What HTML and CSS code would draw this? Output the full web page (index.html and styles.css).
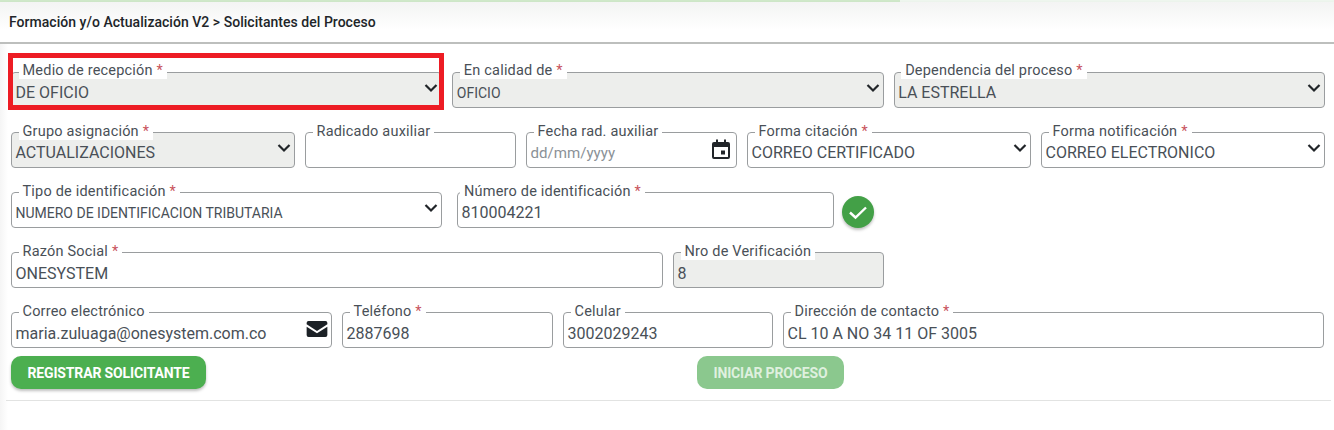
FILE: index.html
```html
<!DOCTYPE html>
<html lang="es">
<head>
<meta charset="utf-8">
<title>Solicitantes del Proceso</title>
<link rel="stylesheet" href="styles.css">
</head>
<body>
<div class="strip"><div class="progress"></div></div>
<header class="topbar">Formación y/o Actualización V2 &gt; Solicitantes del Proceso</header>
<main class="form">
  <div class="highlight"></div>
  <div class="row row-three">
    <div class="field filled"><span class="label">Medio de recepción <i>*</i></span><span class="value">DE OFICIO</span><svg class="chev" viewBox="0 0 16 16"><path d="M2.500 5 8 10.500 13.500 5"/></svg></div>
    <div class="field filled"><span class="label">En calidad de <i>*</i></span><span class="value small">OFICIO</span><svg class="chev" viewBox="0 0 16 16"><path d="M2.500 5 8 10.500 13.500 5"/></svg></div>
    <div class="field filled"><span class="label">Dependencia del proceso <i>*</i></span><span class="value">LA ESTRELLA</span><svg class="chev" viewBox="0 0 16 16"><path d="M2.500 5 8 10.500 13.500 5"/></svg></div>
  </div>
  <div class="row row-five">
    <div class="field filled"><span class="label">Grupo asignación <i>*</i></span><span class="value">ACTUALIZACIONES</span><svg class="chev" viewBox="0 0 16 16"><path d="M2.500 5 8 10.500 13.500 5"/></svg></div>
    <div class="field"><span class="label">Radicado auxiliar</span></div>
    <div class="field"><span class="label">Fecha rad. auxiliar</span><span class="value placeholder">dd/mm/yyyy</span><svg class="cal" viewBox="0 0 24 24"><path fill-rule="evenodd" d="M7 1.500h2V4h6V1.500h2V4h2a2 2 0 0 1 2 2v13a2 2 0 0 1-2 2H5a2 2 0 0 1-2-2V6a2 2 0 0 1 2-2h2zM5 9v10h14V9zm7 3.500h4v4h-4z"/></svg></div>
    <div class="field"><span class="label">Forma citación <i>*</i></span><span class="value">CORREO CERTIFICADO</span><svg class="chev" viewBox="0 0 16 16"><path d="M2.500 5 8 10.500 13.500 5"/></svg></div>
    <div class="field"><span class="label">Forma notificación <i>*</i></span><span class="value">CORREO ELECTRONICO</span><svg class="chev" viewBox="0 0 16 16"><path d="M2.500 5 8 10.500 13.500 5"/></svg></div>
  </div>
  <div class="row row-id">
    <div class="field"><span class="label">Tipo de identificación <i>*</i></span><span class="value small">NUMERO DE IDENTIFICACION TRIBUTARIA</span><svg class="chev" viewBox="0 0 16 16"><path d="M2.500 5 8 10.500 13.500 5"/></svg></div>
    <div class="field field-id"><span class="label">Número de identificación <i>*</i></span><span class="value">810004221</span></div>
    <span class="check"><svg viewBox="0 0 24 24"><path d="M4 12.500 9.500 17.500 20 7.500"/></svg></span>
  </div>
  <div class="row row-social">
    <div class="field"><span class="label">Razón Social <i>*</i></span><span class="value">ONESYSTEM</span></div>
    <div class="field filled"><span class="label">Nro de Verificación</span><span class="value">8</span></div>
  </div>
  <div class="row row-contact">
    <div class="field"><span class="label">Correo electrónico</span><span class="value">maria.zuluaga@onesystem.com.co</span><svg class="mail" viewBox="0 0 22 17"><path d="M2 0h18a2 2 0 0 1 2 2v1.500l-11 7-11-7V2a2 2 0 0 1 2-2z"/><path d="M0 6l11 7 11-7v9a2 2 0 0 1-2 2H2a2 2 0 0 1-2-2z"/></svg></div>
    <div class="field"><span class="label">Teléfono <i>*</i></span><span class="value">2887698</span></div>
    <div class="field"><span class="label">Celular</span><span class="value">3002029243</span></div>
    <div class="field"><span class="label">Dirección de contacto <i>*</i></span><span class="value">CL 10 A NO 34 11 OF 3005</span></div>
  </div>
  <div class="actions">
    <button class="btn" type="button">REGISTRAR SOLICITANTE</button>
    <button class="btn disabled" type="button">INICIAR PROCESO</button>
  </div>
  <hr class="rule">
</main>
</body>
</html>
```
FILE: styles.css
```css
* { box-sizing: border-box; }
html, body { margin: 0; padding: 0; }
body {
  width: 1334px;
  height: 430px;
  overflow: hidden;
  background: #fff;
  font-family: Roboto, "Liberation Sans", sans-serif;
  color: #495057;
}
.strip {
  height: 2px;
  background: #eef6ee;
}
.progress {
  width: 900px;
  height: 2px;
  background: #cfe8c9;
}
.topbar {
  height: 42px;
  padding: 11px 9px 0;
  font-size: 14px;
  font-weight: 500;
  line-height: 18px;
  letter-spacing: .03px;
  color: #212529;
  background: linear-gradient(#f3f4f3, #fff 70%);
  border-bottom: 2px solid #bdbfbd;
  box-shadow: 0 1px 2px rgba(0, 0, 0, .15);
}
.form {
  position: relative;
  padding: 28px 9px 0 11px;
  background: linear-gradient(90deg, #f5f5f5, #fff 8px);
  height: 386px;
}
.highlight {
  position: absolute;
  left: 8px;
  top: 9px;
  width: 436px;
  height: 57px;
  border: 5px solid #ed1c24;
  z-index: 2;
}
.row {
  display: grid;
  column-gap: 10px;
  margin-bottom: 24px;
}
.row-three { grid-template-columns: repeat(3, 1fr); }
.row-five { grid-template-columns: 284fr 211fr 211fr 284fr 284fr; }
.row-id { grid-template-columns: 431px 377px 32px; column-gap: 15px; }
.row-id .check { margin-left: -7px; }
.row-social { grid-template-columns: 652px 211px; }
.row-contact { grid-template-columns: 321px 211px 210px 541px; margin-bottom: 8px; }
.field {
  position: relative;
  height: 36px;
  border: 1px solid #9a9d9f;
  border-radius: 4px;
  background: #fff;
}
.filled { background: #edeeec; }
.label {
  position: absolute;
  left: 6.500px;
  top: -11px;
  padding: 0 4px;
  font-size: 14.500px;
  line-height: 19px;
  letter-spacing: .2px;
  background: linear-gradient(#fff 14px, transparent 14px);
  white-space: nowrap;
}
.filled .label { background: #fff; height: 16px; line-height: 15px; top: -9px; }
.row-three .filled .label { top: -10px; }
.field-id .label { left: 2px; }
.label i { font-style: normal; color: #c8525c; }
.value {
  position: absolute;
  left: 3.500px;
  top: 10px;
  font-size: 16px;
  line-height: 20px;
  white-space: nowrap;
}
.row-social .value, .row-contact .value { top: 11px; }
.small { font-size: 14px; }
.placeholder { font-size: 15.100px; color: #8b9197; }
.chev {
  position: absolute;
  right: 2px;
  top: 7px;
  width: 16px;
  height: 16px;
  fill: none;
  stroke: #212529;
  stroke-width: 2.200;
}
.cal {
  position: absolute;
  right: 3px;
  top: 5px;
  width: 24px;
  height: 24px;
  fill: #212529;
}
.mail {
  position: absolute;
  right: 3px;
  top: 8px;
  width: 22px;
  height: 16px;
  fill: #1c2126;
}
.check {
  display: flex;
  align-items: center;
  justify-content: center;
  width: 32px;
  height: 32px;
  margin-top: 4px;
  border-radius: 50%;
  background: #43a047;
  box-shadow: 0 2px 3px rgba(0, 0, 0, .25);
}
.check svg {
  width: 24px;
  height: 24px;
  fill: none;
  stroke: #fff;
  stroke-width: 2.400;
}
.actions { display: flex; }
.btn {
  height: 33px;
  width: 195px;
  border: 0;
  border-radius: 10px;
  background: #4caf50;
  color: #fff;
  font-family: inherit;
  font-size: 14px;
  font-weight: 700;
  letter-spacing: -.15px;
  box-shadow: 0 2px 3px rgba(0, 0, 0, .25);
}
.btn.disabled {
  width: 147px;
  margin-left: 491px;
  background: #8bc88e;
  color: #dff0df;
  box-shadow: none;
}
.rule {
  margin: 11px -6px 0 -5px;
  border: 0;
  border-top: 1px solid #e2e3e2;
}
```
